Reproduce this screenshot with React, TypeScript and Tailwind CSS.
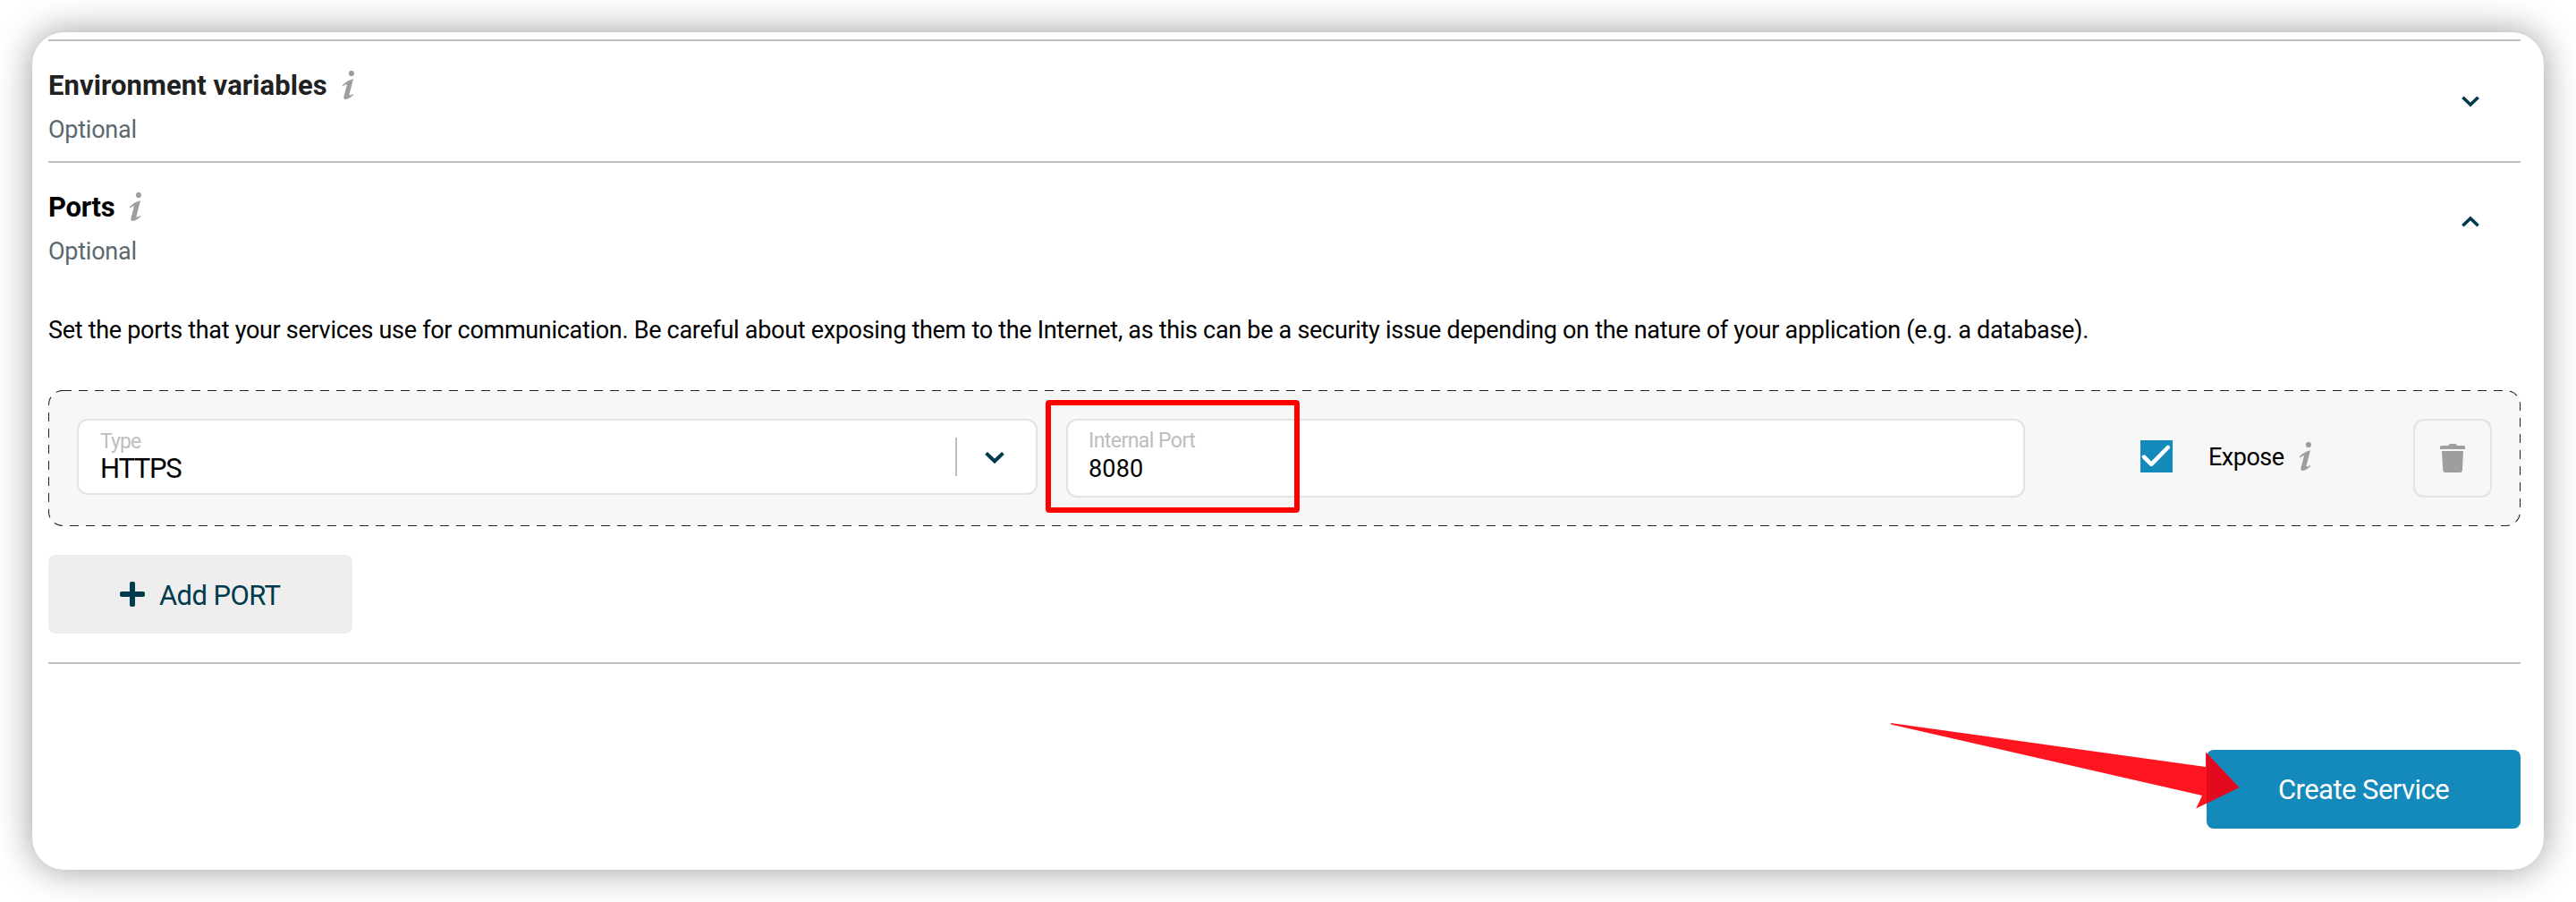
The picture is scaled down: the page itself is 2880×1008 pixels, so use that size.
import React, { type ReactNode } from 'react';

function InfoIcon({ className = '' }: { className?: string }) {
  return (
    <svg className={`block shrink-0 ${className}`} width="14" height="33" viewBox="0 0 14 33" fill="#9e9e9e">
      <circle cx="10.9" cy="3" r="3.1" />
      <path d="M.6 16.4C4 13 8.400 10 13 9.300L8.600 26.200C8.300 27.900 8.900 28 12.900 25.900L13.200 27.100C10.300 29.900 7 32 4.300 32C2.400 32 2 30.600 2.500 28.500L5.800 16.200C6.200 14.700 5.200 14.700 1.300 17.400Z" />
    </svg>
  );
}

function Chevron({ up = false, width = 24, className = '' }: { up?: boolean; width?: number; className?: string }) {
  return (
    <svg className={`block shrink-0 ${className}`} width={width} height="16" viewBox="0 0 24 16" fill="none" stroke="#003a4d" strokeWidth="4">
      <path d={up ? 'M2.600 12.600L12 3.600L21.400 12.600' : 'M2.600 3.400L12 12.400L21.400 3.400'} />
    </svg>
  );
}

function TrashIcon() {
  return (
    <svg width="28" height="32" viewBox="0 0 28 32" fill="#9e9e9e">
      <path d="M9.500 2Q9.500 0 11.500 0H17Q19 0 19 2H26.500Q28 2 28 3.500V6H0V3.500Q0 2 1.500 2Z" />
      <path d="M2 8H26L24.900 29.500Q24.700 32 22.300 32H5.700Q3.500 32 3.300 29.500Z" />
    </svg>
  );
}

function SectionHeader({ title, titleClass, children }: { title: string; titleClass: string; children: ReactNode }) {
  return (
    <div className="flex h-[136px] justify-between border-t-2 border-[#bfbfbf] pt-[30px] pr-[45px]">
      <div>
        <div className="flex gap-4">
          <h2 className={`text-[31px] leading-10 font-bold whitespace-nowrap ${titleClass}`}>{title}</h2>
          <InfoIcon className="mt-[3px]" />
        </div>
        <p className="mt-[9px] text-[27px] leading-10 tracking-[-0.25px] text-[#5a6870]">Optional</p>
      </div>
      {children}
    </div>
  );
}

export default function App() {
  return (
    <div className="h-[1008px] w-[2880px] overflow-hidden bg-white p-9 font-['Roboto',sans-serif]">
      <div className="flex h-[936px] flex-col rounded-[36px] bg-white pt-2 pr-[26px] pl-[18px] shadow-[0_0_40px_rgba(0,0,0,0.4)]">
        <SectionHeader title="Environment variables" titleClass="w-[312px] tracking-[0.08px] text-[#212121]">
          <Chevron width={22} className="mt-[29px]" />
        </SectionHeader>
        <SectionHeader title="Ports" titleClass="w-[74px] tracking-[-0.3px] text-black">
          <Chevron up width={22} className="mt-[28px]" />
        </SectionHeader>

        <p className="mt-[33px] text-[27px] leading-10 tracking-[-0.3px] whitespace-nowrap text-black">
          Set the ports that your services use for communication. Be careful about exposing them to the Internet, as this can be a security issue depending on the nature of your application (e.g. a database).
        </p>

        <div className="relative mt-[47px] flex h-[152px] shrink-0 items-start rounded-2xl bg-[#f7f7f7] pt-8 pl-8">
          <svg className="pointer-events-none absolute inset-0 h-full w-full rounded-2xl" fill="none">
            <rect width="100%" height="100%" rx="16" stroke="#222" strokeWidth="2" strokeDasharray="10 8" />
          </svg>

          <div className="flex h-[85px] w-[1074px] items-center justify-between rounded-xl border-2 border-[#e3e3e3] bg-white pr-[34px] pl-6">
            <div className="w-[100px]">
              <div className="mt-[-3px] text-[23px] leading-[30px] tracking-[-0.9px] text-[#bdbdbd]">Type</div>
              <div className="text-[31px] leading-[30px] tracking-[-1.3px] text-black">HTTPS</div>
            </div>
            <div className="flex items-center gap-[30px]">
              <div className="h-[43px] w-0.5 bg-[#bdbdbd]" />
              <Chevron />
            </div>
          </div>

          <div className="relative ml-8 h-[88px] w-[1072px] rounded-xl border-2 border-[#e3e3e3] bg-white pt-2 pl-[23px]">
            <div className="text-[23px] leading-[30px] tracking-[-0.55px] text-[#bdbdbd]">Internal Port</div>
            <div className="text-[27px] leading-8 tracking-[0.2px] text-black">8080</div>
            <div className="absolute top-[-23px] left-[-25.5px] h-[126px] w-[284px] rounded-[4px] border-[6px] border-[#ff0000]" />
          </div>

          <div className="mt-6 ml-[129px] flex h-9 items-center">
            <div className="h-9 w-9 bg-[#1489bb]">
              <svg width="36" height="36" fill="none" stroke="#fff" strokeWidth="4.600" strokeLinecap="round" strokeLinejoin="round">
                <path d="M4 18.700L12.200 26.800L30.700 8" />
              </svg>
            </div>
            <span className="mt-0.5 ml-[40px] w-[101px] text-[27px] leading-9 tracking-[-0.5px] text-black">Expose</span>
            <InfoIcon />
          </div>

          <button className="ml-[114px] flex h-[88px] w-[88px] items-center justify-center rounded-xl border-2 border-[#e3e3e3]">
            <TrashIcon />
          </button>
        </div>

        <button className="mt-8 flex h-[88px] w-[340px] shrink-0 items-center rounded-lg bg-[#eee] pl-20">
          <svg width="28" height="28" fill="#003a4d">
            <rect x="11" width="6" height="28" rx="2" />
            <rect y="11" width="28" height="6" rx="2" />
          </svg>
          <span className="mt-[3px] ml-4 text-[31px] leading-10 tracking-[-0.6px] whitespace-nowrap text-[#003a4d]">Add PORT</span>
        </button>

        <div className="mt-8 flex justify-end border-t-2 border-[#bfbfbf] pt-24">
          <div className="relative">
            <button className="block h-[88px] w-[351px] rounded-lg bg-[#1489bb] pt-[3px] text-[31px] tracking-[-0.55px] text-white">Create Service</button>
            <svg className="pointer-events-none absolute top-[-38px] left-[-357px]" width="400" height="110">
              <path d="M4 8L356 57L356 40.500L393.300 80L345.300 103.500L352 89L4 9.500Z" fill="#ff1520" />
              <path d="M357 41.500L393.300 80L357 97.800Z" fill="#e20a1e" />
            </svg>
          </div>
        </div>
      </div>
    </div>
  );
}
